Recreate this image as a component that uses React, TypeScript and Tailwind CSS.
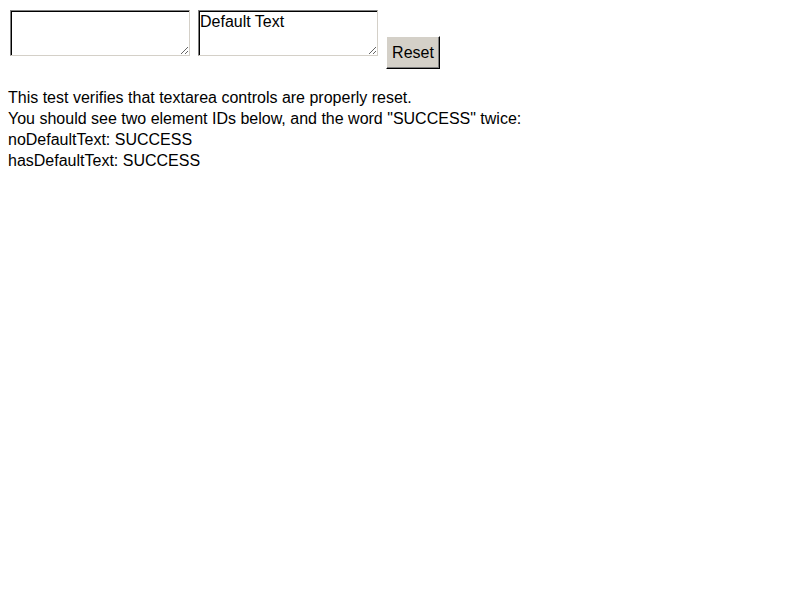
const App = () => {
  return (
    <div className="min-h-[600px] bg-white p-2 text-black font-['Liberation_Sans',Arial,sans-serif] text-[16px]">
      <div className="flex flex-row items-start">
        <textarea
          id="noDefaultText"
          className="mt-[2px] ml-[2px] w-[180px] h-[46px] p-0 border border-[#808080] border-r-[#d4d0c8] border-b-[#d4d0c8] shadow-[inset_1px_1px_0_#000] bg-white text-[16px] leading-[18px] outline-none"
          defaultValue=""
        />
        <textarea
          id="hasDefaultText"
          className="mt-[2px] ml-[8px] w-[180px] h-[46px] p-0 pl-[1px] pt-[2px] border border-[#808080] border-r-[#d4d0c8] border-b-[#d4d0c8] shadow-[inset_1px_1px_0_#000] bg-white text-[16px] leading-[18px] outline-none"
          defaultValue="Default Text"
        />
        <button className="mt-[28px] ml-[8px] w-[54px] h-[33px] bg-[#d4d0c8] border border-t-white border-l-white border-r-black border-b-black shadow-[inset_-1px_-1px_0_#808080] text-[16px]">
          Reset
        </button>
      </div>
      <div className="mt-[18px] leading-[21px]">
        <p>This test verifies that textarea controls are properly reset.</p>
        <p>You should see two element IDs below, and the word "SUCCESS" twice:</p>
        <p>noDefaultText: SUCCESS</p>
        <p>hasDefaultText: SUCCESS</p>
      </div>
    </div>
  );
};

export default App;
